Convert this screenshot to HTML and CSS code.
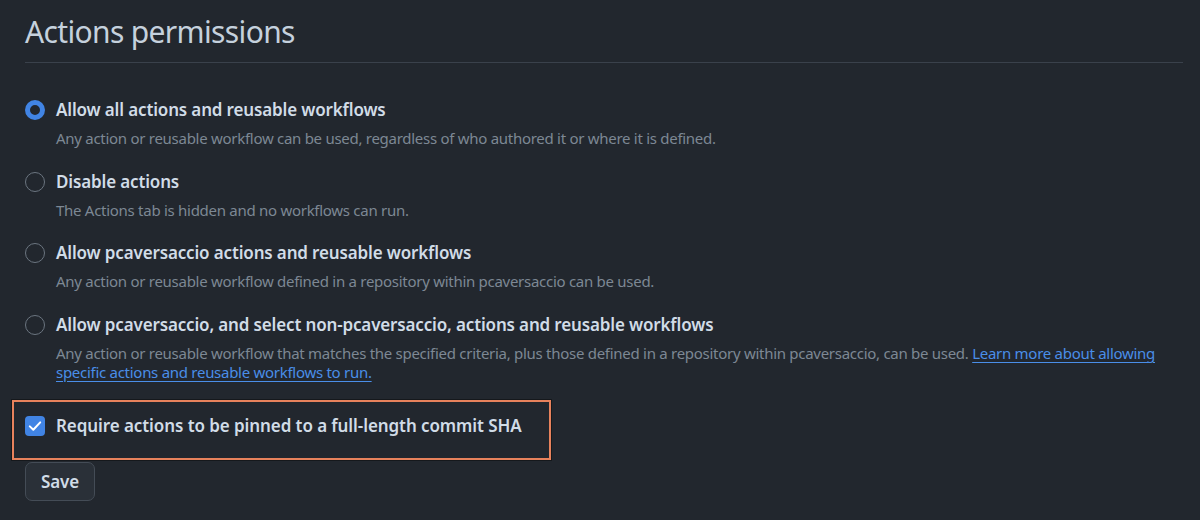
FILE: index.html
```html
<!DOCTYPE html>
<html>
<head>
<meta charset="utf-8">
<link rel="stylesheet" href="styles.css">
</head>
<body>
<div class="page">
  <h2 class="title">Actions permissions</h2>
  <div class="options">
    <div class="option">
      <span class="radio checked"></span>
      <div class="text">
        <div class="label">Allow all actions and reusable workflows</div>
        <div class="desc">Any action or reusable workflow can be used, regardless of who authored it or where it is defined.</div>
      </div>
    </div>
    <div class="option">
      <span class="radio"></span>
      <div class="text">
        <div class="label">Disable actions</div>
        <div class="desc">The Actions tab is hidden and no workflows can run.</div>
      </div>
    </div>
    <div class="option">
      <span class="radio"></span>
      <div class="text">
        <div class="label">Allow pcaversaccio actions and reusable workflows</div>
        <div class="desc">Any action or reusable workflow defined in a repository within pcaversaccio can be used.</div>
      </div>
    </div>
    <div class="option">
      <span class="radio"></span>
      <div class="text">
        <div class="label">Allow pcaversaccio, and select non-pcaversaccio, actions and reusable workflows</div>
        <div class="desc">Any action or reusable workflow that matches the specified criteria, plus those defined in a repository within pcaversaccio, can be used. <a href="#" class="link">Learn more about allowing specific actions and reusable workflows to run.</a></div>
      </div>
    </div>
  </div>
  <div class="highlight">
    <span class="checkbox">
      <svg width="16" height="16" viewBox="0 0 16 16"><path d="M2.8 8.4 L6.3 11.8 L13.2 4.4" fill="none" stroke="#fff" stroke-width="2" stroke-linecap="round" stroke-linejoin="round"/></svg>
    </span>
    <span class="label">Require actions to be pinned to a full-length commit SHA</span>
  </div>
  <button class="btn">Save</button>
</div>
</body>
</html>
```
FILE: styles.css
```css
html, body {
  margin: 0;
  padding: 0;
  background: #22272e;
  height: 100%;
}
.page {
  padding: 0 17px 0 25px;
  font-family: "Noto Sans", "Open Sans", sans-serif;
  color: #cdd9e5;
}
.title {
  margin: 0;
  padding-top: 11px;
  font-size: 30px;
  font-weight: 400;
  letter-spacing: -0.65px;
  line-height: 42px;
  color: #c5d1dd;
  padding-bottom: 9px;
  border-bottom: 1.5px solid #3a414b;
}
.options {
  display: flex;
  flex-direction: column;
  gap: 22.7px;
  margin-top: 36px;
}
.option {
  display: flex;
  gap: 11px;
  align-items: flex-start;
}
.radio {
  flex: none;
  width: 20px;
  height: 20px;
  box-sizing: border-box;
  border-radius: 50%;
  border: 1.5px solid #6b7580;
  margin-top: 1px;
}
.radio.checked {
  border: 5px solid #4184e4;
  background: #22272e;
}
.label {
  font-size: 17px;
  font-weight: 600;
  letter-spacing: -0.15px;
  line-height: 22px;
  color: #d1dce7;
}
.highlight .label {
  letter-spacing: -0.08px;
}
.desc {
  margin-top: 8px;
  font-size: 15px;
  letter-spacing: -0.28px;
  line-height: 19px;
  color: #7d8894;
}
.link {
  color: #4a8ee8;
  text-decoration: underline;
  text-underline-offset: 3px;
}
.highlight {
  display: flex;
  align-items: center;
  gap: 11px;
  margin: 18px 0 0 -13px;
  padding: 0 0 8px 11px;
  box-sizing: border-box;
  width: 539px;
  height: 60px;
  border: 2px solid #e8825c;
  box-shadow: 0 0 0 1px #15181c;
}
.checkbox {
  flex: none;
  width: 20px;
  height: 20px;
  border-radius: 4px;
  background: #4184e4;
  display: flex;
  align-items: center;
  justify-content: center;
}
.btn {
  display: block;
  margin-top: 2px;
  width: 70px;
  height: 39px;
  border: 1px solid #444c56;
  border-radius: 7px;
  background: #2a3038;
  color: #d1dce7;
  font-family: "Noto Sans", "Open Sans", sans-serif;
  font-size: 17px;
  font-weight: 600;
  letter-spacing: -0.15px;
  padding: 0;
}
```
